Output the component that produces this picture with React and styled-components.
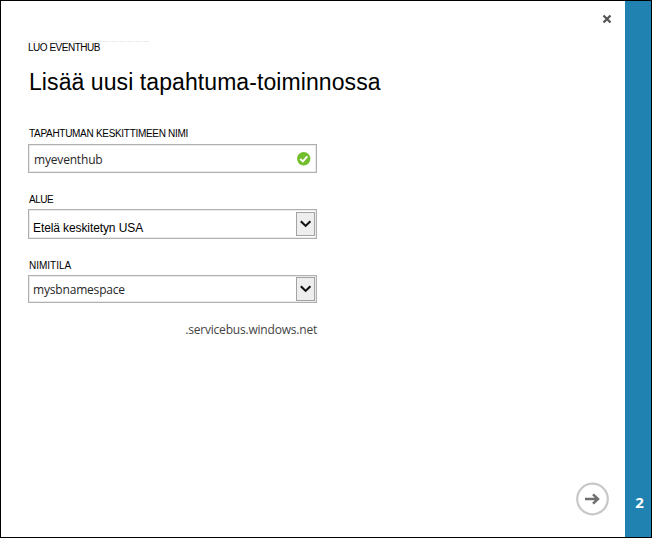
import React from "react";
import styled, { createGlobalStyle } from "styled-components";

const GlobalStyle = createGlobalStyle`
  * { box-sizing: border-box; }
  body { margin: 0; background: #fff; }
`;

const Dialog = styled.div`
  display: flex;
  width: 652px;
  height: 538px;
  border: 1px solid #000;
  background: #fff;
  overflow: hidden;
  color: #000;
  font-family: "Liberation Sans", Arial, sans-serif;
`;

const Content = styled.main`
  flex: 1;
  display: flex;
  flex-direction: column;
  padding: 40px 0 0 27px;
`;

const StepRail = styled.aside`
  width: 26px;
  display: flex;
  align-items: flex-end;
  justify-content: center;
  padding: 0 0 25px 3px;
  background: #1f82b0;
  color: #fff;
  font: bold 15px/20px "Open Sans", sans-serif;
`;

const ActionColumn = styled.div`
  width: 36px;
  display: flex;
  flex-direction: column;
  align-items: center;
  justify-content: space-between;
  padding: 13px 0 21px;
  margin-right: 14px;
`;

const IconButton = styled.button`
  display: flex;
  padding: 0;
  border: 0;
  background: none;
  margin-left: ${(p) => p.$shift || 0}px;
`;

const FaintRule = styled.div`
  width: 118px;
  height: 1px;
  margin-left: 3px;
  background: repeating-linear-gradient(90deg, #ececec 0 6px, #fafafa 6px 8px);
`;

const Caption = styled.div`
  height: 12px;
  font-size: 10px;
  line-height: 12px;
  white-space: nowrap;
  letter-spacing: ${(p) => p.$spacing || 0}px;
  padding-left: ${(p) => p.$indent || 0}px;
`;

const Title = styled.h1`
  margin: 13px 0 1px 1px;
  height: 30px;
  font-size: 23px;
  line-height: 30px;
  font-weight: 400;
  white-space: nowrap;
  letter-spacing: 0.08px;
`;

const Field = styled.section`
  width: 289px;
  margin-top: ${(p) => p.$gap}px;
`;

const Box = styled.div`
  display: flex;
  align-items: center;
  justify-content: space-between;
  height: ${(p) => p.$height || 29}px;
  margin-top: ${(p) => p.$gap || 5}px;
  padding: 0 ${(p) => (p.$select ? 1 : 5)}px 0 ${(p) => (p.$select ? 4 : 5)}px;
  border: 1px solid #b0b0b0;
  box-shadow: inset 0 0 0 0.5px #d8d8d8;
`;

const Value = styled.span`
  color: ${(p) => (p.$plain ? "#000" : "#262626")};
  font: ${(p) => (p.$plain ? '12px/16px "Liberation Sans", sans-serif' : '12px/16px "Open Sans", sans-serif')};
  letter-spacing: ${(p) => p.$spacing || 0}px;
  padding-top: ${(p) => (p.$plain ? 7 : 2)}px;
`;

const DropButton = styled.span`
  display: flex;
  align-items: center;
  justify-content: center;
  width: 19px;
  height: 24px;
  padding-bottom: 1px;
  border: 1px solid #a3a3a3;
  background: #eee;
`;

const Suffix = styled.div`
  width: 289px;
  margin-top: 19px;
  text-align: right;
  color: #444;
  font: 12px/16px "Open Sans", sans-serif;
  letter-spacing: -0.2px;
`;

const Chevron = () => (
  <DropButton>
    <svg width="12" height="8" viewBox="0 0 12 8" fill="none">
      <path d="M.8 1.2 5.6 5.9l4.8-4.7" stroke="#111" strokeWidth="2.1" />
    </svg>
  </DropButton>
);

const Check = () => (
  <svg width="14" height="14" viewBox="0 0 14 14" fill="none">
    <circle cx="6.7" cy="6.7" r="6.7" fill="#72bf2d" />
    <path d="m3.2 6.9 2.6 2.5 4.5-5" stroke="#fff" strokeWidth="2" />
  </svg>
);

export default function App() {
  return (
    <>
      <GlobalStyle />
      <Dialog>
        <Content>
          <FaintRule />
          <Caption $spacing={-0.48}>LUO EVENTHUB</Caption>
          <Title>Lisää uusi tapahtuma-toiminnossa</Title>
          <Field $gap={30}>
            <Caption $spacing={-0.3} $indent={1}>TAPAHTUMAN KESKITTIMEEN NIMI</Caption>
            <Box $gap={4}>
              <Value $spacing={-0.18}>myeventhub</Value>
              <Check />
            </Box>
          </Field>
          <Field $gap={21}>
            <Caption $spacing={-0.5} $indent={1}>ALUE</Caption>
            <Box $select $gap={3} $height={30}>
              <Value $plain $spacing={-0.1}>Etelä keskitetyn USA</Value>
              <Chevron />
            </Box>
          </Field>
          <Field $gap={21}>
            <Caption $indent={1}>NIMITILA</Caption>
            <Box $select $gap={3} $height={28}>
              <Value $spacing={-0.18}>mysbnamespace</Value>
              <Chevron />
            </Box>
          </Field>
          <Suffix>.servicebus.windows.net</Suffix>
        </Content>
        <ActionColumn>
          <IconButton $shift={27} aria-label="Sulje">
            <svg width="10" height="10" viewBox="0 0 10 10">
              <path d="m1.5 1.5 7 7m0-7-7 7" stroke="#555" strokeWidth="2.3" />
            </svg>
          </IconButton>
          <IconButton aria-label="Seuraava">
            <svg width="34" height="34" viewBox="0 0 34 34" fill="none">
              <circle cx="16.5" cy="17" r="15.3" stroke="#c8c8c8" strokeWidth="2.2" />
              <path d="M9 17h13m-5-4.7 5 4.7-5 4.7" stroke="#707070" strokeWidth="2.5" />
            </svg>
          </IconButton>
        </ActionColumn>
        <StepRail>2</StepRail>
      </Dialog>
    </>
  );
}
